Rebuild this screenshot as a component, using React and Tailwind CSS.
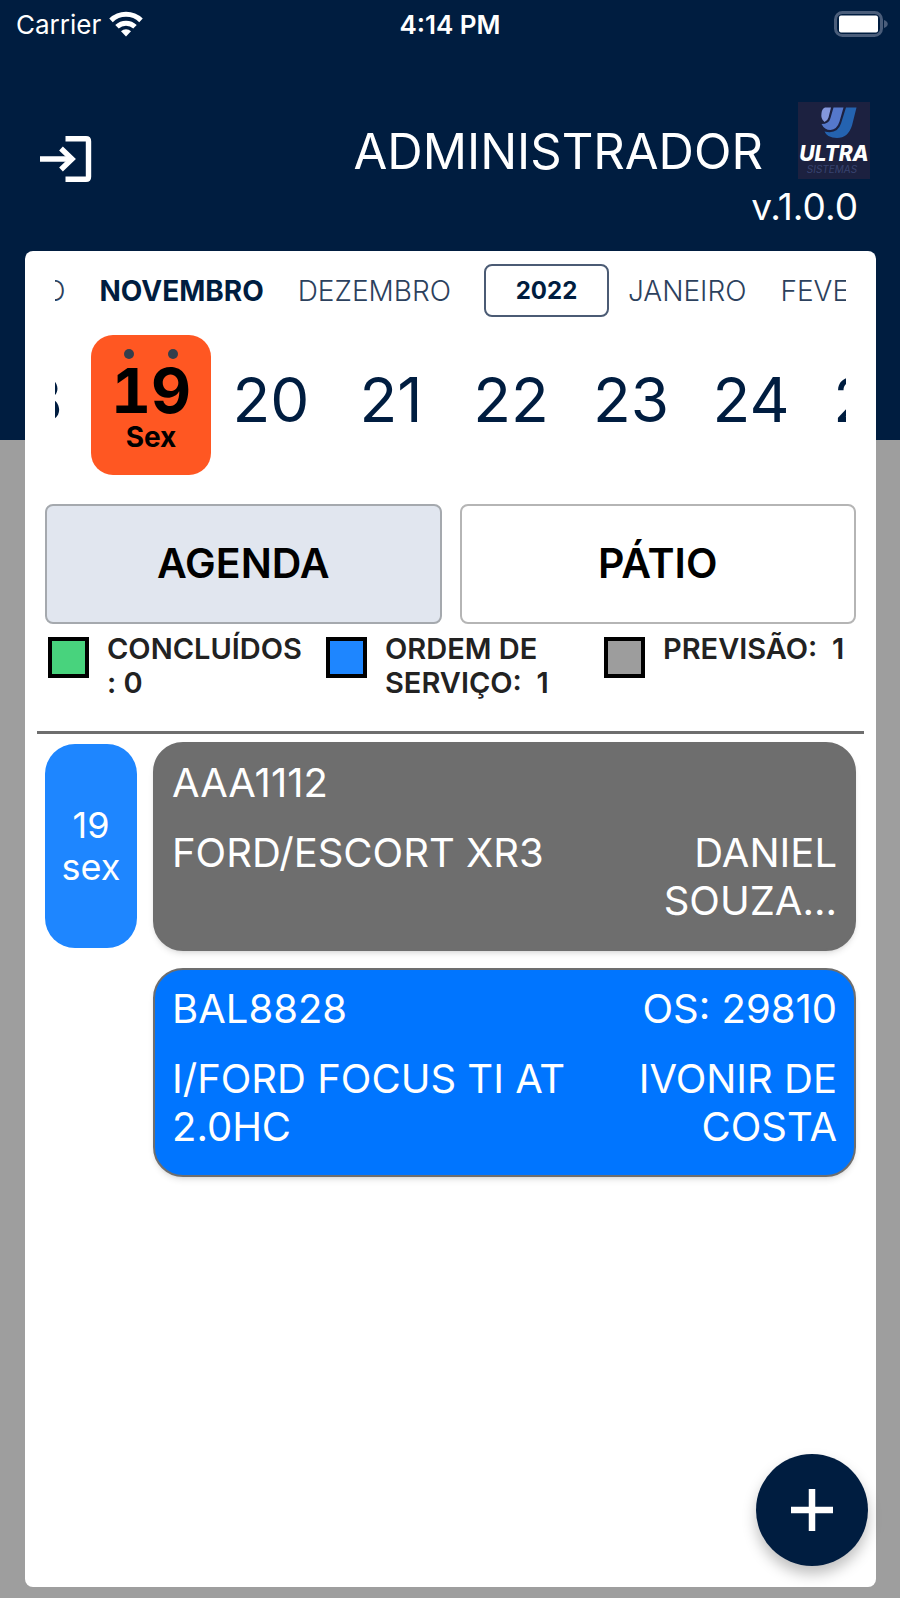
import React from 'react';

const MONTHS_BEFORE = [
  { label: 'OUTUBRO' },
  { label: 'NOVEMBRO', active: true },
  { label: 'DEZEMBRO' },
];
const MONTHS_AFTER = [{ label: 'JANEIRO' }, { label: 'FEVEREIRO' }];

const DAYS = [
  { day: 18 },
  { day: 19, weekday: 'Sex', active: true },
  { day: 20 },
  { day: 21 },
  { day: 22 },
  { day: 23 },
  { day: 24 },
  { day: 25 },
];

const LEGEND = [
  { label: 'CONCLUÍDOS', count: ':\u00a00', color: 'bg-[#48d37d]' },
  { label: 'ORDEM DE SERVIÇO:', count: '\u00a01', color: 'bg-[#1e86ff]' },
  { label: 'PREVISÃO:', count: '\u00a01', color: 'bg-[#9d9d9d]' },
];

const ORDERS = [
  {
    plate: 'AAA1112',
    vehicle: 'FORD/ESCORT XR3',
    client: 'DANIEL SOUZA...',
    color: 'bg-[#6e6e6e]',
  },
  {
    plate: 'BAL8828',
    os: 'OS: 29810',
    vehicle: 'I/FORD FOCUS TI AT 2.0HC',
    client: 'IVONIR DE COSTA',
    color: 'bg-[#0075ff]',
  },
];

function WifiIcon() {
  return (
    <svg className="h-[26px] w-[34px]" viewBox="0 0 34 26" fill="none" stroke="white" strokeWidth="5">
      <path d="M2 9.4A21.500 21.500 0 0 1 32 9.4" />
      <path d="M8 15.8A13 13 0 0 1 26 15.8" />
      <path d="M17 25.5l-5-5.200a7.200 7.200 0 0 1 10 0z" fill="white" stroke="none" />
    </svg>
  );
}

function BatteryIcon() {
  return (
    <svg className="h-[26px] w-[54px]" viewBox="0 0 54 26" fill="none">
      <rect x="1.500" y="1.500" width="46" height="23" rx="7" stroke="#4a5d7a" strokeWidth="3" />
      <rect x="5" y="4.500" width="39" height="17" rx="2" fill="white" />
      <path d="M50 9c5 1.500 5 6.500 0 8z" fill="#4a5d7a" />
    </svg>
  );
}

function ExitIcon() {
  return (
    <svg className="h-[46px] w-[52px]" viewBox="0 0 52 46" fill="none" stroke="white" strokeWidth="5.400">
      <path d="M0 23h33" />
      <path d="M21 12.500l11 10.500-11 10.500" />
      <path d="M25.500 2.700h20.500q2.500 0 2.500 2.500v35.600q0 2.500-2.500 2.500h-20.500" />
    </svg>
  );
}

function Logo() {
  return (
    <svg className="h-[77px] w-[72px]" viewBox="0 0 72 77" role="img" aria-label="Ultra Sistemas">
      <rect width="72" height="77" fill="#1c2140" />
      <path d="M27 5.500h6l-2.500 10q-1 3.500-4 4.500-4-3-3-9 .5-4.500 3.500-5.500z" fill="#8497dc" />
      <path d="M35.500 5.500h10l-4 14q-2.500 8-9 8.500-6 0-9-6 7.500 0 9-6z" fill="#5578cb" />
      <path d="M48 5.500h10.500l-4.500 18q-4 12.500-15 12.500-10 0-12.500-6.500 13 3 16.500-8z" fill="#2463b0" />
      <text x="36" y="59" textAnchor="middle" fontFamily="Inter, sans-serif" fontSize="21" fontWeight="800" fontStyle="italic" fill="white">
        ULTRA
      </text>
      <text x="34" y="71" textAnchor="middle" fontFamily="Inter, sans-serif" fontSize="10" fontStyle="italic" fill="#38436f">
        SISTEMAS
      </text>
    </svg>
  );
}

function StatusBar() {
  return (
    <div className="grid h-12 grid-cols-3 items-center px-3 text-[26px]">
      <div className="flex items-center gap-2 pl-1">
        <span>Carrier</span>
        <WifiIcon />
      </div>
      <span className="text-center font-semibold">4:14 PM</span>
      <div className="flex justify-end">
        <BatteryIcon />
      </div>
    </div>
  );
}

function Header() {
  return (
    <header className="flex h-[203px] items-start justify-between pt-[54px] pr-[30px] pl-10">
      <button className="mt-[34px]" aria-label="Sair">
        <ExitIcon />
      </button>
      <div className="flex flex-col items-end">
        <div className="flex items-start gap-[35px]">
          <h1 className="pt-[21px] text-[49px] leading-[58px]">ADMINISTRADOR</h1>
          <Logo />
        </div>
        <span className="mr-3 pt-1 text-[37px] leading-[44px]">v.1.0.0</span>
      </div>
    </header>
  );
}

function Month({ label, active }) {
  return (
    <button className={active ? 'px-[17px] font-bold' : 'px-[17px] font-light text-[#2c415d]'}>{label}</button>
  );
}

function MonthStrip() {
  return (
    <div className="mx-[30px] overflow-hidden">
      <div className="-ml-[144px] flex w-max items-center text-[28px] leading-[34px] text-[#001d40]">
        {MONTHS_BEFORE.map((m) => (
          <Month key={m.label} {...m} />
        ))}
        <button className="mr-0.5 ml-4 h-[53px] w-[125px] rounded-lg border-2 border-[#4b5b74] text-[24px] font-bold">
          2022
        </button>
        {MONTHS_AFTER.map((m) => (
          <Month key={m.label} {...m} />
        ))}
      </div>
    </div>
  );
}

function Day({ day, weekday, active }) {
  if (!active) {
    return (
      <button className="w-[120px] pb-[10px] text-center text-[62px] leading-[72px] text-[#001d40]">{day}</button>
    );
  }
  return (
    <button className="relative flex h-[140px] w-[120px] flex-col items-center rounded-[22px] bg-[#ff5722] pt-6 font-bold text-black">
      <span className="absolute top-[14px] left-[33px] h-2.5 w-2.5 rounded-full bg-[#333e4c]" />
      <span className="absolute top-[14px] right-[33px] h-2.5 w-2.5 rounded-full bg-[#333e4c]" />
      <span className="text-[62px] leading-[64px] tabular-nums">{day}</span>
      <span className="text-[28px] leading-[28px]">{weekday}</span>
    </button>
  );
}

function DayStrip() {
  return (
    <div className="mx-[30px] mt-[18px] overflow-hidden">
      <div className="-ml-[84px] flex w-max items-center">
        {DAYS.map((d) => (
          <Day key={d.day} {...d} />
        ))}
      </div>
    </div>
  );
}

function Legend() {
  return (
    <ul className="mt-2 grid grid-cols-[1fr_1fr_272px] pl-[23px] text-[29px] leading-[34px] font-semibold text-[#222]">
      {LEGEND.map((item) => (
        <li key={item.label} className="flex h-[99px] items-start gap-[18px]">
          <span className={`mt-[5px] h-[41px] w-[41px] shrink-0 border-4 border-black ${item.color}`} />
          <span>
            {item.label} {item.count}
          </span>
        </li>
      ))}
    </ul>
  );
}

function OrderCard({ plate, os, vehicle, client, color }) {
  return (
    <article
      className={`h-[209px] rounded-[30px] border-2 border-[#6e6e6e] px-[17px] pt-[15px] text-[40px] leading-[48px] text-white shadow-md ${color}`}
    >
      <div className="flex justify-between">
        <span>{plate}</span>
        <span>{os}</span>
      </div>
      <div className="mt-[22px] flex justify-between">
        <span className="w-[410px]">{vehicle}</span>
        <span className="w-[210px] text-right">{client}</span>
      </div>
    </article>
  );
}

export default function App() {
  return (
    <div className="flex min-h-screen flex-col bg-[linear-gradient(#001d40_0_440px,#9e9e9e_440px)] font-['Inter',sans-serif] text-white">
      <StatusBar />
      <Header />
      <main className="relative mr-6 mb-[11px] ml-[25px] grow rounded-lg bg-white pt-[13px]">
        <MonthStrip />
        <DayStrip />
        <div className="mx-5 mt-[29px] grid grid-cols-2 gap-[18px] text-[41px] font-semibold text-black">
          <button className="h-[120px] rounded-lg border-2 border-[#a5a9ae] bg-[#e1e6ef]">AGENDA</button>
          <button className="h-[120px] rounded-lg border-2 border-[#b5b5b5]">PÁTIO</button>
        </div>
        <Legend />
        <hr className="mx-3 border-t-[3px] border-[#6e6e6e]" />
        <section className="mx-5 mt-2 flex items-start gap-4">
          <div className="mt-0.5 flex h-[204px] w-[92px] shrink-0 flex-col items-center justify-center rounded-[30px] bg-[#1e86ff] text-[36px] leading-[42px]">
            <span>19</span>
            <span>sex</span>
          </div>
          <div className="flex grow flex-col gap-[17px]">
            {ORDERS.map((order) => (
              <OrderCard key={order.plate} {...order} />
            ))}
          </div>
        </section>
        <button
          className="absolute right-2 bottom-[21px] flex h-28 w-28 items-center justify-center rounded-full bg-[#001d40] shadow-[0_8px_14px_rgba(0,0,0,0.25)]"
          aria-label="Adicionar"
        >
          <svg className="h-[42px] w-[42px]" viewBox="0 0 42 42" stroke="white" strokeWidth="6.500">
            <path d="M21 0v42M0 21h42" />
          </svg>
        </button>
      </main>
    </div>
  );
}
